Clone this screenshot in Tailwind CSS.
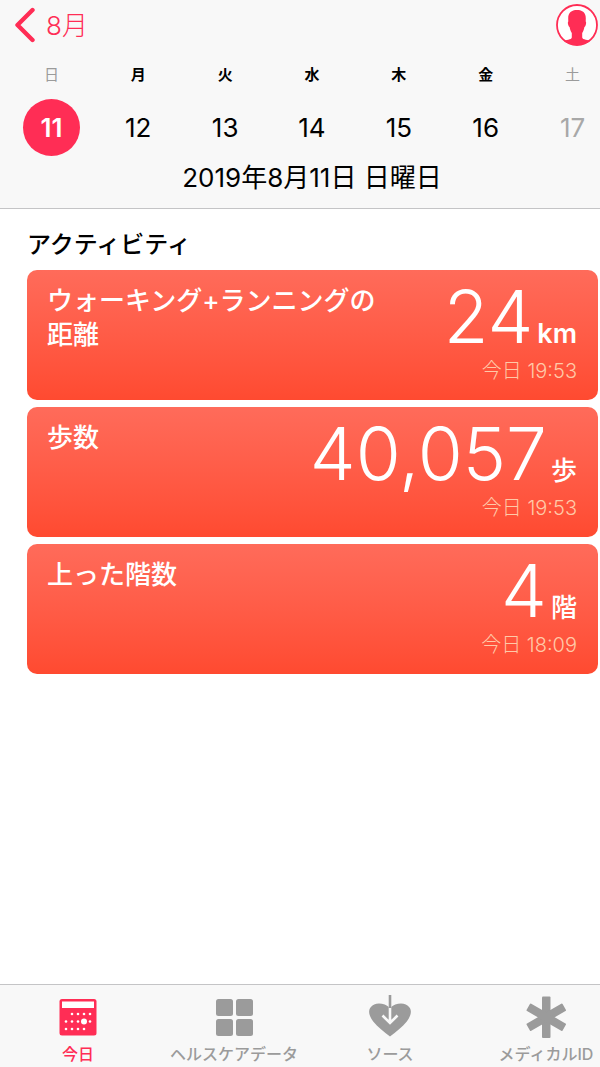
<!DOCTYPE html>
<html lang="ja">
<head>
  <meta charset="UTF-8">
  <meta name="viewport" content="width=device-width, initial-scale=1">
  <title>ヘルスケア</title>
  <script src="https://cdn.jsdelivr.net/npm/@tailwindcss/browser@4"></script>
  <style>
    body { font-family: Inter, 'Noto Sans CJK JP', sans-serif; }
  </style>
</head>
<body class="bg-white text-black min-h-screen flex flex-col overflow-x-hidden">

  <!-- Header: back link, profile, week strip -->
  <header class="bg-[#f8f8f8] border-b border-[#c4c4c6] overflow-hidden pb-3">
    <div class="flex items-center justify-between h-[50px] pl-3.5 pr-0.5">
      <a href="#" class="flex items-center gap-2.5 text-[#ff2d55] text-[26px] leading-9">
        <svg class="w-[22px] h-9" viewBox="0 0 22 36" fill="none" stroke="currentColor" stroke-width="4.4" stroke-linecap="round" stroke-linejoin="round">
          <path d="M18.5 3 L3.5 18 L18.5 33" />
        </svg>
        <span class="pt-0.5 font-light">8月</span>
      </a>
      <button type="button" aria-label="プロフィール" class="text-[#ff2d55]">
        <svg class="block w-[42px] h-[42px]" viewBox="0 0 42 42">
          <circle cx="21" cy="21" r="20" fill="#fff" stroke="currentColor" stroke-width="1.800" />
          <path fill="currentColor" d="M21 6c5.500 0 8.900 2.600 8.800 8.400l-.1 3.200c.6.500.5 1.700.1 3.200-.3 1.300-.8 2-1.400 2.300-.4 2.400-1.100 4.400-2.200 6v4.400c.2 1.300 1.500 1.800 3.500 2.200 2 .3 3.600.5 4.700 1.100C31 39.700 26.200 41 21 41S11 39.700 7.600 36.800c1.100-.6 2.700-.8 4.700-1.100 2-.4 3.300-.9 3.500-2.200v-4.400c-1.100-1.600-1.800-3.600-2.200-6-.6-.3-1.100-1-1.400-2.300-.4-1.500-.5-2.700.1-3.200l-.1-3.200C12.100 8.600 15.500 6 21 6z" />
        </svg>
      </button>
    </div>

    <div class="grid grid-cols-7 ml-2 -mr-4 text-center">
      <div class="text-[15px] leading-[49px] text-[#9b9b9b]">日</div>
      <div class="text-[15px] leading-[49px] font-bold">月</div>
      <div class="text-[15px] leading-[49px] font-bold">火</div>
      <div class="text-[15px] leading-[49px] font-bold">水</div>
      <div class="text-[15px] leading-[49px] font-bold">木</div>
      <div class="text-[15px] leading-[49px] font-bold">金</div>
      <div class="text-[15px] leading-[49px] text-[#9b9b9b]">土</div>

      <button type="button" class="justify-self-center size-[57px] rounded-full bg-[#ff2d55] text-white text-[26px] font-semibold">11</button>
      <button type="button" class="text-[26px]">12</button>
      <button type="button" class="text-[26px]">13</button>
      <button type="button" class="text-[26px]">14</button>
      <button type="button" class="text-[26px]">15</button>
      <button type="button" class="text-[26px]">16</button>
      <button type="button" class="text-[26px] text-[#a8a8a8]">17</button>
    </div>

    <p class="mt-1 pl-6 text-center text-[26px] leading-9">2019年8月11日 日曜日</p>
  </header>

  <!-- Activity cards -->
  <main class="flex-1 pl-[27px] pr-0.5 pt-5">
    <h1 class="text-[24px] leading-8 font-medium mb-[9px]">アクティビティ</h1>

    <div class="flex flex-col gap-[7px]">
      <section class="flex justify-between h-[130px] rounded-[10px] bg-linear-to-b from-[#ff6b5a] to-[#ff4a30] text-white pl-5 pr-[21px] pt-3">
        <h2 class="pt-0.5 text-[26px] leading-[34px] font-medium">ウォーキング+ランニングの<br>距離</h2>
        <div class="text-right whitespace-nowrap">
          <p class="flex items-baseline justify-end gap-1 h-[70px] leading-[70px]">
            <span class="text-[73px] font-light">24</span>
            <span class="text-[27px] font-semibold">km</span>
          </p>
          <p class="text-[20px] leading-[38px] font-light text-[#ffc9a8]">今日 19:53</p>
        </div>
      </section>

      <section class="flex justify-between h-[130px] rounded-[10px] bg-linear-to-b from-[#ff6b5a] to-[#ff4a30] text-white pl-5 pr-[21px] pt-3">
        <h2 class="pt-0.5 text-[26px] leading-[34px] font-medium">歩数</h2>
        <div class="text-right whitespace-nowrap">
          <p class="flex items-baseline justify-end gap-1 h-[70px] leading-[70px]">
            <span class="text-[73px] font-light">40,057</span>
            <span class="text-[26px] font-medium">歩</span>
          </p>
          <p class="text-[20px] leading-[38px] font-light text-[#ffc9a8]">今日 19:53</p>
        </div>
      </section>

      <section class="flex justify-between h-[130px] rounded-[10px] bg-linear-to-b from-[#ff6b5a] to-[#ff4a30] text-white pl-5 pr-[21px] pt-3">
        <h2 class="pt-0.5 text-[26px] leading-[34px] font-medium">上った階数</h2>
        <div class="text-right whitespace-nowrap">
          <p class="flex items-baseline justify-end gap-1 h-[70px] leading-[70px]">
            <span class="text-[73px] font-light">4</span>
            <span class="text-[26px] font-medium">階</span>
          </p>
          <p class="text-[20px] leading-[38px] font-light text-[#ffc9a8]">今日 18:09</p>
        </div>
      </section>
    </div>
  </main>

  <!-- Tab bar -->
  <nav class="bg-[#f8f8f8] border-t border-[#c4c4c6] overflow-hidden">
    <div class="grid grid-cols-4 -mr-6 pt-2.5 text-[#9b9b9b] text-[16px] leading-[25px] font-medium">
      <a href="#" class="flex flex-col items-center gap-[3px] text-[#ff2d55]">
        <svg class="w-11 h-11" viewBox="0 0 44 44">
          <rect x="3.500" y="4" width="37" height="36.500" rx="2.500" fill="currentColor" />
          <rect x="6" y="6.500" width="32" height="6.500" fill="#fff" />
          <g fill="#fff">
            <circle cx="16" cy="19" r="1.300" /><circle cx="22" cy="19" r="1.300" /><circle cx="28" cy="19" r="1.300" /><circle cx="34" cy="19" r="1.300" />
            <circle cx="10" cy="26.500" r="1.300" /><circle cx="16" cy="26.500" r="1.300" /><circle cx="22" cy="26.500" r="1.300" /><circle cx="28" cy="26.500" r="3" /><circle cx="34" cy="26.500" r="1.300" />
            <circle cx="10" cy="34" r="1.300" /><circle cx="16" cy="34" r="1.300" /><circle cx="22" cy="34" r="1.300" /><circle cx="28" cy="34" r="1.300" />
          </g>
        </svg>
        今日
      </a>
      <a href="#" class="flex flex-col items-center gap-[3px]">
        <svg class="w-11 h-11" viewBox="0 0 44 44" fill="currentColor">
          <rect x="4" y="4" width="17" height="17" rx="2.500" />
          <rect x="24" y="4" width="17" height="17" rx="2.500" />
          <rect x="4" y="24" width="17" height="17" rx="2.500" />
          <rect x="24" y="24" width="17" height="17" rx="2.500" />
        </svg>
        ヘルスケアデータ
      </a>
      <a href="#" class="flex flex-col items-center gap-[3px]">
        <svg class="w-11 h-11" viewBox="0 0 44 44" fill="none">
          <path fill="currentColor" d="M22 41.500C16 36.800 9.500 32 5.200 26.500 1.500 21.500-.3 16.500 2.500 12.500 6.500 7 16 7.500 22 13c6-5.500 15.500-6 19.500-.5 2.800 4 1 9-2.700 14C34.500 32 28 36.800 22 41.500z" />
          <path d="M22 12v15M14.500 20.500L22 28l7.500-7.500" stroke="#f8f8f8" stroke-width="2.600" />
          <path d="M22 0v13" stroke="currentColor" stroke-width="2.600" />
        </svg>
        ソース
      </a>
      <a href="#" class="flex flex-col items-center gap-[3px]">
        <svg class="w-11 h-11" viewBox="0 0 44 44" fill="currentColor">
          <rect x="18" y="1.500" width="8.500" height="41.500" rx="1" />
          <rect x="18" y="1.500" width="8.500" height="41.500" rx="1" transform="rotate(60 22.250 22.250)" />
          <rect x="18" y="1.500" width="8.500" height="41.500" rx="1" transform="rotate(-60 22.250 22.250)" />
        </svg>
        メディカルID
      </a>
    </div>
  </nav>

</body>
</html>
